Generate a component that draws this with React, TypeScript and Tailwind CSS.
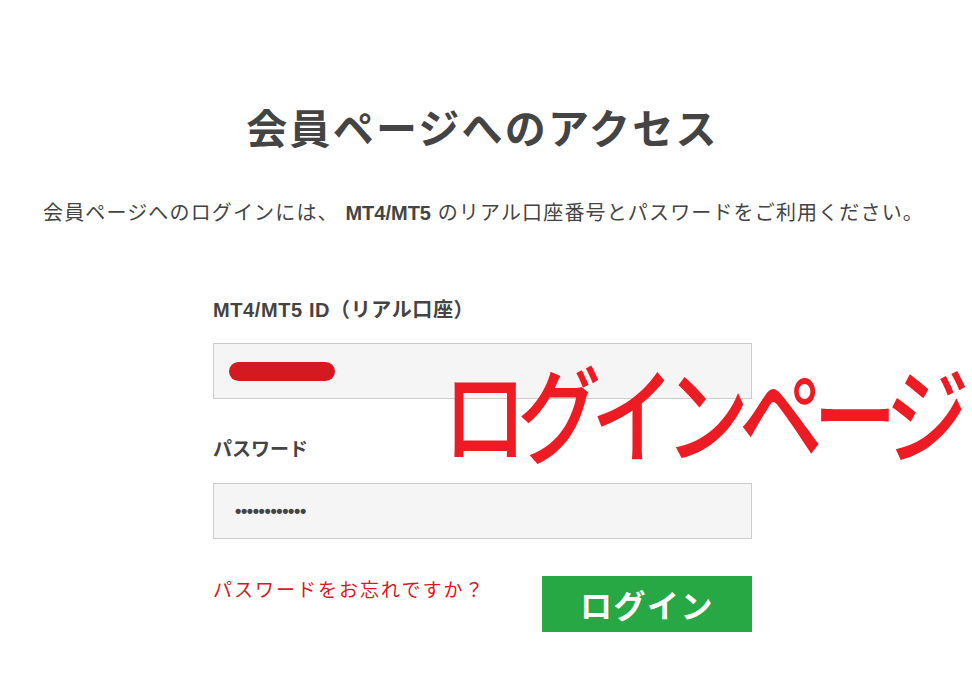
import React from "react";

const jp = { fontFamily: '"Liberation Sans", "Noto Sans CJK JP", sans-serif' };
const jpOnly = { fontFamily: '"Noto Sans CJK JP", sans-serif' };

export default function App() {
  return (
    <div className="relative w-[972px] h-[699px] bg-white overflow-hidden text-[#444]" style={jp}>
      <div className="pt-[96px] w-[965px] text-center">
        <h1 className="text-[41px] leading-[60px] font-bold tracking-[2.2px] text-[#444]" style={jpOnly}>
          会員ページへのアクセス
        </h1>
      </div>
      <p className="mt-[42px] pl-[43px] text-[20px] leading-[30px] tracking-[1.15px] text-[#444] whitespace-nowrap">
        会員ページへのログインには、 <span className="font-semibold tracking-normal">MT4/MT5</span> のリアル口座番号とパスワードをご利用ください。
      </p>
      <div className="ml-[213px] w-[539px] mt-[68px]">
        <label className="block text-[20px] leading-[28px] font-bold tracking-[0.6px] text-[#444]">MT4/MT5 ID（リアル口座）</label>
        <div className="mt-[19px] h-[56px] bg-[#f5f5f5] border border-[#cccccc] flex items-center pl-[15px]">
          <div className="w-[106px] h-[19px] rounded-full bg-[#d41a21]" />
        </div>
        <label className="block mt-[37px] text-[19px] leading-[28px] font-bold text-[#444]">パスワード</label>
        <div className="mt-[19px] h-[56px] bg-[#f5f5f5] border border-[#cccccc] flex items-center pl-[21px]">
          <span className="text-[18px] tracking-[-0.4px] text-[#444] font-bold">••••••••••••</span>
        </div>
        <div className="mt-[37px] flex items-start justify-between">
          <a className="text-[19px] leading-[28px] text-[#d7191f] tracking-[2px] mt-[1px]">パスワードをお忘れですか？</a>
          <button className="w-[210px] h-[56px] bg-[#28a745] text-white text-[32px] font-bold tracking-[1.5px] flex items-center justify-center" style={jpOnly}>
            ログイン
          </button>
        </div>
      </div>
      <div
        className="absolute left-[443px] top-[357px] text-[105px] leading-none font-medium text-[#ed1c24] whitespace-nowrap tracking-[-12.5px] origin-top-left scale-x-[0.8]"
        style={jpOnly}
      >
        ログインページ
      </div>
    </div>
  );
}
